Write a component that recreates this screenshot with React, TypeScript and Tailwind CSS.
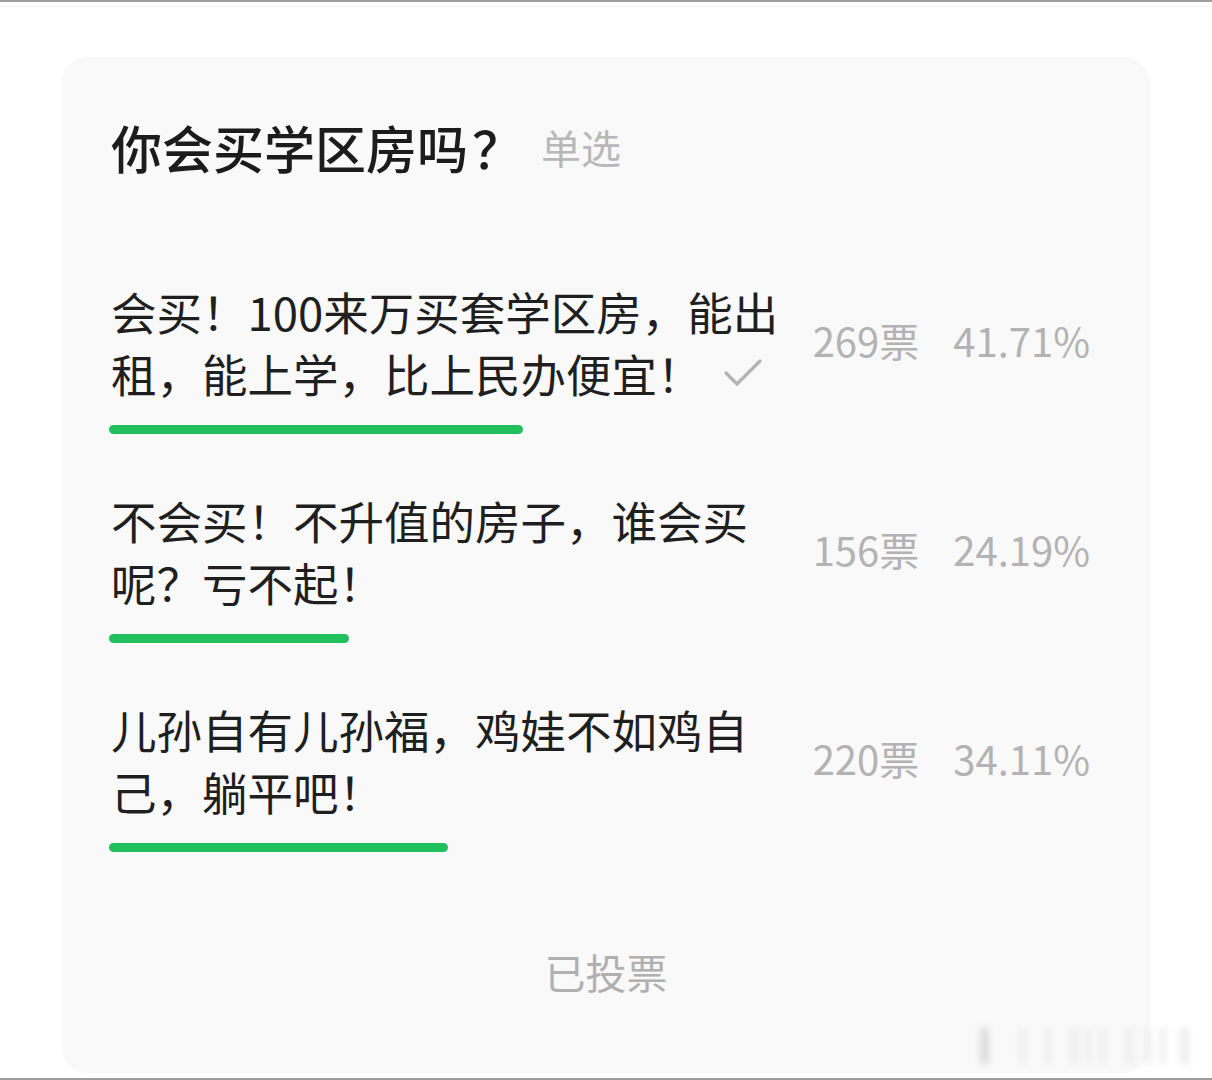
import React from "react";

const options = [
  { text: "会买！100来万买套学区房，能出租，能上学，比上民办便宜！", votes: "269票", pct: "41.71%", bar: 414, checked: true },
  { text: "不会买！不升值的房子，谁会买呢？亏不起！", votes: "156票", pct: "24.19%", bar: 240, checked: false },
  { text: "儿孙自有儿孙福，鸡娃不如鸡自己，躺平吧！", votes: "220票", pct: "34.11%", bar: 339, checked: false },
];

function Check() {
  return (
    <svg width="38" height="30" viewBox="0 0 38 30" className="inline-block align-[5px] ml-[21px]">
      <path d="M2 15 L13 26 L36 3" fill="none" stroke="#b3b3b3" strokeWidth="3.2" strokeLinecap="round" strokeLinejoin="round" />
    </svg>
  );
}

export default function App() {
  return (
    <div
      className="w-[1212px] h-[1080px] bg-white flex flex-col relative overflow-hidden"
      style={{ fontFamily: '"Noto Sans CJK SC", "Noto Sans", sans-serif' }}
    >
      <div className="h-[2px] bg-[#9d9d9d]" />
      <div className="h-[1px] mt-[4px] bg-[#f4f4f4]" />
      <div className="mx-[62px] mt-[50px] h-[1016px] rounded-[26px] bg-[#f9f9f9] pl-[49px] pr-[60px] pt-[60px] flex flex-col">
        <div className="flex items-center h-[60px]">
          <span className="text-[51px] leading-[60px] font-medium text-[#1c1c1c]">
            你会买学区房吗<span className="ml-[4px]">？</span>
          </span>
          <span className="ml-[18px] text-[40px] leading-[60px] text-[#b8b8b8]">单选</span>
        </div>
        <div className="mt-[103px] flex flex-col gap-[55px]">
          {options.map((o, i) => (
            <div key={i} className="flex flex-col">
              <div className="flex items-center justify-between">
                <div className="w-[672px] text-[45.5px] leading-[62px] text-[#1f1f1f] break-all">
                  {o.text}
                  {o.checked && <Check />}
                </div>
                <div className="flex items-center gap-[34px] text-[40px] leading-[62px] text-[#b3b3b3] whitespace-nowrap -mt-[4px]">
                  <span>{o.votes}</span>
                  <span>{o.pct}</span>
                </div>
              </div>
              <div className="mt-[21px] h-[9px] rounded-full bg-[#21c05c] -ml-[2px]" style={{ width: o.bar }} />
            </div>
          ))}
        </div>
        <div className="mt-[99px] flex justify-center -ml-[49px] -mr-[60px]">
          <span className="text-[41px] leading-[41px] text-[#b0b0b0]">已投票</span>
        </div>
      </div>
      <div className="mt-[5px] h-[2px] bg-[#9d9d9d]" />
      <svg className="absolute left-[960px] top-[1022px] blur-[3px]" width="240" height="50" viewBox="0 0 240 50">
        {[20, 60, 85, 110, 125, 140, 165, 185, 200, 220].map((x, i) => (
          <rect key={i} x={x} y={6} width={i % 3 === 0 ? 9 : 6} height={36} fill={i === 0 ? "#dcdcdc" : "#efefef"} />
        ))}
      </svg>
    </div>
  );
}
